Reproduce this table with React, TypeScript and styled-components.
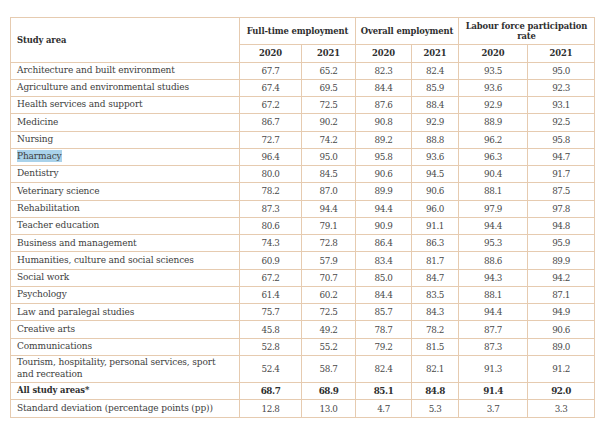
import React from "react";
import styled, { createGlobalStyle } from "styled-components";

const Global = createGlobalStyle`
  html, body { margin: 0; padding: 0; background: #ffffff; }
  body { font-family: "DejaVu Serif", "Liberation Serif", serif; }
`;

const Page = styled.div`
  width: 606px;
  height: 428px;
  padding: 17px 0 0 10px;
  box-sizing: border-box;
  background: #ffffff;
`;

const Table = styled.table`
  border-collapse: collapse;
  table-layout: fixed;
  width: 585px;
  font-family: "DejaVu Serif", "Liberation Serif", serif;
  font-size: 8.3px;
  color: #3c3c3c;
`;

const border = "#e6cbb0";

const HeadCell = styled.th<{ $left?: boolean; $h?: number }>`
  border: 1px solid ${border};
  font-weight: bold;
  font-size: 8.4px;
  letter-spacing: -0.1px;
  color: #2e2e2e;
  text-align: ${(p) => (p.$left ? "left" : "center")};
  padding: ${(p) => (p.$left ? "0 6px" : "0 4px")};
  height: ${(p) => p.$h ?? 17}px;
  line-height: 10px;
  box-sizing: border-box;
  vertical-align: middle;
`;

const Row = styled.tr<{ $h: number }>`
  height: ${(p) => p.$h}px;
`;

const LabelCell = styled.td<{ $bold?: boolean }>`
  border: 1px solid ${border};
  padding: 0 6px;
  text-align: left;
  font-size: ${(p) => (p.$bold ? "8.4px" : "9px")};
  letter-spacing: ${(p) => (p.$bold ? "-0.1px" : "-0.12px")};
  font-weight: ${(p) => (p.$bold ? "bold" : "normal")};
  color: ${(p) => (p.$bold ? "#2e2e2e" : "#404040")};
  line-height: 11.5px;
  vertical-align: middle;
  white-space: normal;
`;

const NumCell = styled.td<{ $bold?: boolean }>`
  border: 1px solid ${border};
  padding: 0;
  text-align: center;
  font-size: 8.8px;
  letter-spacing: -0.45px;
  font-weight: ${(p) => (p.$bold ? "bold" : "normal")};
  color: ${(p) => (p.$bold ? "#2e2e2e" : "#4a4a4a")};
  vertical-align: middle;
`;

const Highlight = styled.span`
  background: #a9d2ea;
  padding: 1px 0;
`;

type R = { name: string; v: string[]; h?: number; bold?: boolean; hl?: boolean };

const rows: R[] = [
  { name: "Architecture and built environment", v: ["67.7", "65.2", "82.3", "82.4", "93.5", "95.0"] },
  { name: "Agriculture and environmental studies", v: ["67.4", "69.5", "84.4", "85.9", "93.6", "92.3"] },
  { name: "Health services and support", v: ["67.2", "72.5", "87.6", "88.4", "92.9", "93.1"] },
  { name: "Medicine", v: ["86.7", "90.2", "90.8", "92.9", "88.9", "92.5"] },
  { name: "Nursing", v: ["72.7", "74.2", "89.2", "88.8", "96.2", "95.8"] },
  { name: "Pharmacy", v: ["96.4", "95.0", "95.8", "93.6", "96.3", "94.7"], hl: true },
  { name: "Dentistry", v: ["80.0", "84.5", "90.6", "94.5", "90.4", "91.7"] },
  { name: "Veterinary science", v: ["78.2", "87.0", "89.9", "90.6", "88.1", "87.5"] },
  { name: "Rehabilitation", v: ["87.3", "94.4", "94.4", "96.0", "97.9", "97.8"] },
  { name: "Teacher education", v: ["80.6", "79.1", "90.9", "91.1", "94.4", "94.8"] },
  { name: "Business and management", v: ["74.3", "72.8", "86.4", "86.3", "95.3", "95.9"] },
  { name: "Humanities, culture and social sciences", v: ["60.9", "57.9", "83.4", "81.7", "88.6", "89.9"] },
  { name: "Social work", v: ["67.2", "70.7", "85.0", "84.7", "94.3", "94.2"] },
  { name: "Psychology", v: ["61.4", "60.2", "84.4", "83.5", "88.1", "87.1"] },
  { name: "Law and paralegal studies", v: ["75.7", "72.5", "85.7", "84.3", "94.4", "94.9"] },
  { name: "Creative arts", v: ["45.8", "49.2", "78.7", "78.2", "87.7", "90.6"] },
  { name: "Communications", v: ["52.8", "55.2", "79.2", "81.5", "87.3", "89.0"] },
  { name: "Tourism, hospitality, personal services, sport and recreation", v: ["52.4", "58.7", "82.4", "82.1", "91.3", "91.2"], h: 26.7 },
  { name: "All study areas*", v: ["68.7", "68.9", "85.1", "84.8", "91.4", "92.0"], bold: true, h: 17.6 },
  { name: "Standard deviation (percentage points (pp))", v: ["12.8", "13.0", "4.7", "5.3", "3.7", "3.3"], h: 18 },
];

const widths = [229, 62, 54, 56, 47, 69, 67];

export default function App() {
  return (
    <>
      <Global />
      <Page>
        <Table>
          <colgroup>
            {widths.map((w, i) => (
              <col key={i} style={{ width: w }} />
            ))}
          </colgroup>
          <thead>
            <tr>
              <HeadCell $left rowSpan={2} $h={26.5}>Study area</HeadCell>
              <HeadCell colSpan={2} $h={26.5}>Full-time employment</HeadCell>
              <HeadCell colSpan={2} $h={26.5}>Overall employment</HeadCell>
              <HeadCell colSpan={2} $h={26.5}>Labour force participation rate</HeadCell>
            </tr>
            <tr>
              {["2020", "2021", "2020", "2021", "2020", "2021"].map((y, i) => (
                <HeadCell key={i} $h={18}>{y}</HeadCell>
              ))}
            </tr>
          </thead>
          <tbody>
            {rows.map((r) => (
              <Row key={r.name} $h={r.h ?? 17.27}>
                <LabelCell $bold={r.bold}>
                  {r.hl ? <Highlight>{r.name}</Highlight> : r.name}
                </LabelCell>
                {r.v.map((n, i) => (
                  <NumCell key={i} $bold={r.bold}>{n}</NumCell>
                ))}
              </Row>
            ))}
          </tbody>
        </Table>
      </Page>
    </>
  );
}
